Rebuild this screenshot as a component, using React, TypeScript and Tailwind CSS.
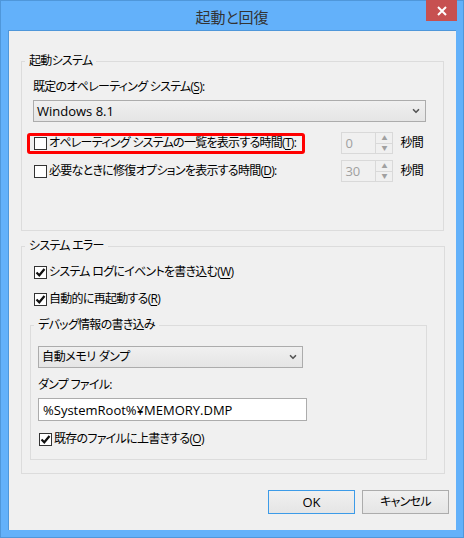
import { ChevronDown } from "lucide-react";

const font = {
  fontFamily: '"Open Sans", "Noto Sans CJK JP", sans-serif',
};

const Check = ({ checked }: { checked?: boolean }) => (
  <span className="flex h-[13px] w-[13px] shrink-0 items-center justify-center border border-[#333] bg-white">
    {checked && (
      <svg width="11" height="11" viewBox="0 0 11 11">
        <path d="M1.5 5.5 L4.3 8.3 L9.5 2" fill="none" stroke="#111" strokeWidth="2.2" />
      </svg>
    )}
  </span>
);

const CheckRow = ({ checked, children }: { checked?: boolean; children: React.ReactNode }) => (
  <div className="flex h-[18px] items-center gap-[2px] pl-[1px]">
    <Check checked={checked} />
    <span>{children}</span>
  </div>
);

const Combo = ({ value, className }: { value: string; className: string }) => (
  <div
    className={`flex items-center justify-between border border-[#acacac] bg-gradient-to-b from-[#f0f0f0] to-[#e5e5e5] pl-[3px] pr-[4px] ${className}`}
  >
    <span>{value}</span>
    <ChevronDown className="h-[10px] w-[10px] text-[#555]" strokeWidth={4} />
  </div>
);

const Spin = ({ value }: { value: string }) => (
  <div className="flex h-[22px] tracking-normal">
    <div className="flex w-[35px] items-center border border-[#d9d9d9] bg-[#f0f0f0] pl-[3px] text-[13px] text-[#a0a0a0]">
      {value}
    </div>
    <div className="flex w-[17px] flex-col border border-l-0 border-[#d9d9d9]">
      <div className="flex flex-1 items-center justify-center border-b border-[#d9d9d9] text-[6px] leading-none text-[#a0a0a0]">
        ▲
      </div>
      <div className="flex flex-1 items-center justify-center text-[6px] leading-none text-[#a0a0a0]">
        ▼
      </div>
    </div>
  </div>
);

const Key = ({ k }: { k: string }) => <span className="underline underline-offset-2">{k}</span>;

export default function App() {
  return (
    <div
      className="h-[538px] w-[464px] border border-[#4f97da] bg-[#63b1fa] text-[12px] leading-[16px] tracking-[-0.06em] text-black [font-feature-settings:'palt']"
      style={font}
    >
      {/* title bar */}
      <div className="relative flex h-[29px] items-center justify-center pt-[2px] text-[15px] tracking-normal text-[#333]">
        起動と回復
        <div className="absolute right-[6px] top-[-1px] flex h-[21px] w-[31px] items-center justify-center bg-[#c75050]">
          <svg width="10" height="10" viewBox="0 0 10 10">
            <path d="M1 1 L9 9 M9 1 L1 9" stroke="white" strokeWidth="2" />
          </svg>
        </div>
      </div>

      {/* client area */}
      <div className="ml-[7px] h-[500px] w-[448px] border-l border-t border-[#4f97da] bg-[#f0f0f0] pl-[12px] pt-[22px]">
        <fieldset className="w-[423px] border border-[#dcdcdc] px-0 pb-[48px]">
          <legend className="ml-[3px] px-[4px]">起動システム</legend>
          <div className="pl-[11px] pr-[17px]">
            <div className="mt-[10px]">
              既定のオペレーティング システム(<Key k="S" />):
            </div>
            <Combo value="Windows 8.1" className="mt-[5px] h-[22px] text-[13px] tracking-normal" />
            <div className="relative mt-[10px] flex h-[22px] items-center">
              <div className="absolute left-[-6px] top-[1px] h-[21px] w-[278px] rounded-[3px] border-[3px] border-[#f00]" />
              <CheckRow>
                オペレーティング システムの一覧を表示する時間(<Key k="T" />):
              </CheckRow>
              <div className="ml-auto flex items-center gap-[7px] pr-[3px]">
                <Spin value="0" />
                <span>秒間</span>
              </div>
            </div>
            <div className="mt-[6px] flex h-[22px] items-center">
              <CheckRow>
                必要なときに修復オプションを表示する時間(<Key k="D" />):
              </CheckRow>
              <div className="ml-auto flex items-center gap-[7px] pr-[3px]">
                <Spin value="30" />
                <span>秒間</span>
              </div>
            </div>
          </div>
        </fieldset>

        <fieldset className="mt-[7px] w-[423px] border border-[#dcdcdc] px-0 pb-[13px]">
          <legend className="ml-[3px] px-[4px]">システム エラー</legend>
          <div className="pl-[11px] pr-[17px]">
            <div className="mt-[9px]">
              <CheckRow checked>
                システム ログにイベントを書き込む(<Key k="W" />)
              </CheckRow>
            </div>
            <div className="mt-[9px]">
              <CheckRow checked>
                自動的に再起動する(<Key k="R" />)
              </CheckRow>
            </div>

            <fieldset className="ml-[-3px] mt-[9px] w-[397px] border border-[#dcdcdc] px-0 pb-[11px]">
              <legend className="ml-[3px] px-[4px]">デバッグ情報の書き込み</legend>
              <div className="pl-[7px]">
                <Combo value="自動メモリ ダンプ" className="mt-[13px] h-[22px] w-[265px] tracking-[-0.03em]" />
                <div className="mt-[9px]">ダンプ ファイル:</div>
                <div className="mt-[5px] flex h-[23px] w-[269px] items-center border border-[#acacac] bg-white pl-[4px] text-[13px] tracking-normal">
                  %SystemRoot%¥MEMORY.DMP
                </div>
                <div className="mt-[9px]">
                  <CheckRow checked>
                    既存のファイルに上書きする(<Key k="O" />)
                  </CheckRow>
                </div>
              </div>
            </fieldset>
          </div>
        </fieldset>

        <div className="mr-[7px] mt-[16px] flex justify-end gap-[7px]">
          <button className="h-[24px] w-[87px] border border-[#3c9be8] bg-gradient-to-b from-[#f0f0f0] to-[#e5e5e5] text-[13px] tracking-normal">
            OK
          </button>
          <button className="h-[24px] w-[87px] border border-[#acacac] bg-gradient-to-b from-[#f0f0f0] to-[#e5e5e5]">
            キャンセル
          </button>
        </div>
      </div>
    </div>
  );
}
